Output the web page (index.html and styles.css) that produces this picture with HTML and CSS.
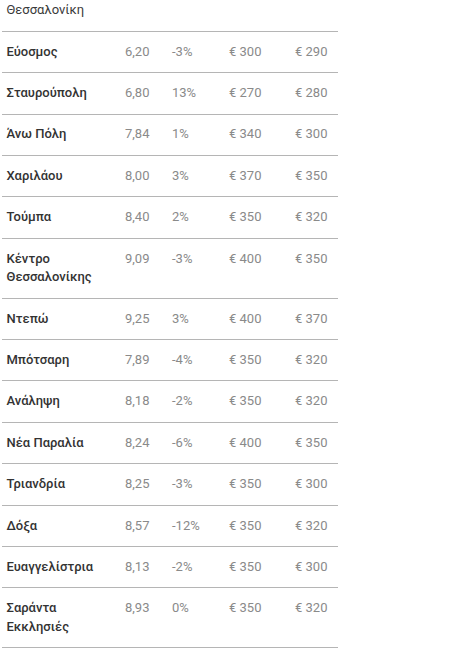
FILE: index.html
```html
<!DOCTYPE html>
<html lang="el">
<head>
<meta charset="utf-8">
<title>Θεσσαλονίκη</title>
<link rel="stylesheet" href="styles.css">
</head>
<body>
<table class="prices">
  <colgroup>
    <col class="c-name"><col class="c-score"><col class="c-chg"><col class="c-p1"><col class="c-p2">
  </colgroup>
  <tbody>
    <tr class="first"><td class="name">Θεσσαλονίκη</td><td></td><td></td><td></td><td></td></tr>
    <tr><td class="name">Εύοσμος</td><td>6,20</td><td>-3%</td><td>€ 300</td><td>€ 290</td></tr>
    <tr><td class="name">Σταυρούπολη</td><td>6,80</td><td>13%</td><td>€ 270</td><td>€ 280</td></tr>
    <tr><td class="name">Άνω Πόλη</td><td>7,84</td><td>1%</td><td>€ 340</td><td>€ 300</td></tr>
    <tr><td class="name">Χαριλάου</td><td>8,00</td><td>3%</td><td>€ 370</td><td>€ 350</td></tr>
    <tr><td class="name">Τούμπα</td><td>8,40</td><td>2%</td><td>€ 350</td><td>€ 320</td></tr>
    <tr><td class="name">Κέντρο Θεσσαλονίκης</td><td>9,09</td><td>-3%</td><td>€ 400</td><td>€ 350</td></tr>
    <tr><td class="name">Ντεπώ</td><td>9,25</td><td>3%</td><td>€ 400</td><td>€ 370</td></tr>
    <tr><td class="name">Μπότσαρη</td><td>7,89</td><td>-4%</td><td>€ 350</td><td>€ 320</td></tr>
    <tr><td class="name">Ανάληψη</td><td>8,18</td><td>-2%</td><td>€ 350</td><td>€ 320</td></tr>
    <tr><td class="name">Νέα Παραλία</td><td>8,24</td><td>-6%</td><td>€ 400</td><td>€ 350</td></tr>
    <tr><td class="name">Τριανδρία</td><td>8,25</td><td>-3%</td><td>€ 350</td><td>€ 300</td></tr>
    <tr><td class="name">Δόξα</td><td>8,57</td><td>-12%</td><td>€ 350</td><td>€ 320</td></tr>
    <tr><td class="name">Ευαγγελίστρια</td><td>8,13</td><td>-2%</td><td>€ 350</td><td>€ 300</td></tr>
    <tr><td class="name">Σαράντα Εκκλησιές</td><td>8,93</td><td>0%</td><td>€ 350</td><td>€ 320</td></tr>
  </tbody>
</table>
</body>
</html>
```

FILE: styles.css
```css
html, body {
  margin: 0;
  padding: 0;
  background: #ffffff;
}
body {
  font-family: Roboto, "Noto Sans", "DejaVu Sans", sans-serif;
  font-size: 13px;
  line-height: 1.43;
}
.prices {
  margin-left: 2px;
  width: 336px;
  border-collapse: collapse;
  table-layout: fixed;
}
.c-name { width: 119px; }
.c-score { width: 47px; }
.c-chg { width: 57px; }
.c-p1 { width: 66px; }
.c-p2 { width: 47px; }
.prices td {
  padding: 10.92px 4px;
  vertical-align: top;
  color: #8a8a8a;
  font-weight: 400;
  border-bottom: 1px solid #b5b5b5;
  text-align: left;
}
.prices td.name {
  color: #333333;
  font-weight: 500;
  padding-left: 4.5px;
}
.prices tr.first td {
  padding-top: 1.3px;
}
.prices tr.first td.name {
  font-weight: 400;
  color: #3a3a3a;
}
```
